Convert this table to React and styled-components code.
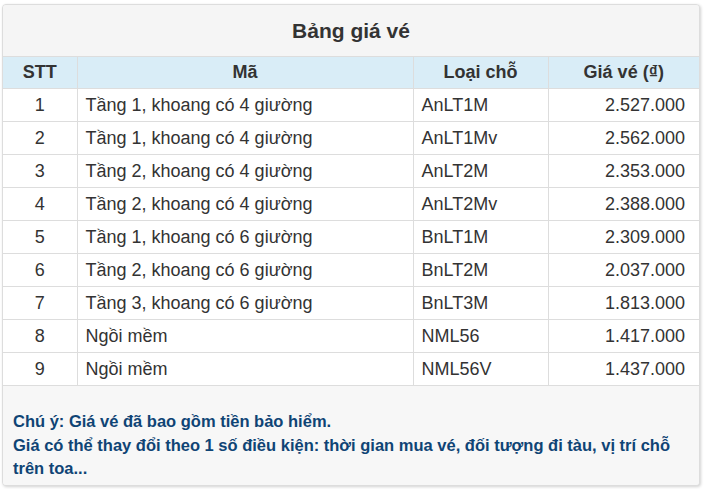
import styled, { createGlobalStyle } from "styled-components";

const GlobalStyle = createGlobalStyle`
  body {
    margin: 0;
    background: #ffffff;
    font-family: "Liberation Sans", Arial, sans-serif;
  }
`;

const Panel = styled.div`
  margin: 4px 5px 3px 2px;
  border: 1px solid #dddddd;
  border-radius: 4px;
  background: #f7f7f7;
  box-shadow: 1px 1px 3px rgba(0, 0, 0, 0.18);
  overflow: hidden;
`;

const Heading = styled.div`
  height: 51px;
  display: flex;
  align-items: center;
  justify-content: center;
  background: #f5f5f5;
  border-bottom: 1px solid #dddddd;
  color: #333333;
  font-size: 21px;
  font-weight: bold;
`;

const Table = styled.table`
  width: 100%;
  border-collapse: collapse;
  table-layout: fixed;
  background: #ffffff;
  font-size: 18px;
  color: #333333;
`;

const HeadCell = styled.th`
  background: #d9edf7;
  border-left: 1px solid #dddddd;
  border-bottom: 1px solid #dddddd;
  padding: 5px 8px;
  height: 21px;
  line-height: 21px;
  font-weight: bold;
  text-align: center;
  &:first-child {
    border-left: none;
  }
`;

const Cell = styled.td`
  border-left: 1px solid #dddddd;
  border-bottom: 1px solid #dddddd;
  padding: 5px ${(p) => (p.$align === "right" ? "14px" : "8px")};
  height: 22px;
  line-height: 22px;
  text-align: ${(p) => p.$align || "left"};
  white-space: nowrap;
  &:first-child {
    border-left: none;
  }
`;

const Footer = styled.div`
  padding: 24px 12px 4px 10px;
  background: #f7f7f7;
  color: #0f4475;
  font-size: 16.5px;
  font-weight: bold;
  line-height: 23.5px;
`;

const rows = [
  ["1", "Tầng 1, khoang có 4 giường", "AnLT1M", "2.527.000"],
  ["2", "Tầng 1, khoang có 4 giường", "AnLT1Mv", "2.562.000"],
  ["3", "Tầng 2, khoang có 4 giường", "AnLT2M", "2.353.000"],
  ["4", "Tầng 2, khoang có 4 giường", "AnLT2Mv", "2.388.000"],
  ["5", "Tầng 1, khoang có 6 giường", "BnLT1M", "2.309.000"],
  ["6", "Tầng 2, khoang có 6 giường", "BnLT2M", "2.037.000"],
  ["7", "Tầng 3, khoang có 6 giường", "BnLT3M", "1.813.000"],
  ["8", "Ngồi mềm", "NML56", "1.417.000"],
  ["9", "Ngồi mềm", "NML56V", "1.437.000"],
];

export default function App() {
  return (
    <>
      <GlobalStyle />
      <Panel>
        <Heading>Bảng giá vé</Heading>
        <Table>
          <colgroup>
            <col style={{ width: 74 }} />
            <col style={{ width: 336 }} />
            <col style={{ width: 135 }} />
            <col />
          </colgroup>
          <thead>
            <tr>
              <HeadCell>STT</HeadCell>
              <HeadCell>Mã</HeadCell>
              <HeadCell>Loại chỗ</HeadCell>
              <HeadCell>Giá vé (₫)</HeadCell>
            </tr>
          </thead>
          <tbody>
            {rows.map((r) => (
              <tr key={r[0]}>
                <Cell $align="center">{r[0]}</Cell>
                <Cell>{r[1]}</Cell>
                <Cell>{r[2]}</Cell>
                <Cell $align="right">{r[3]}</Cell>
              </tr>
            ))}
          </tbody>
        </Table>
        <Footer>
          Chú ý: Giá vé đã bao gồm tiền bảo hiểm.
          <br />
          Giá có thể thay đổi theo 1 số điều kiện: thời gian mua vé, đối tượng đi tàu, vị trí chỗ trên toa...
        </Footer>
      </Panel>
    </>
  );
}
